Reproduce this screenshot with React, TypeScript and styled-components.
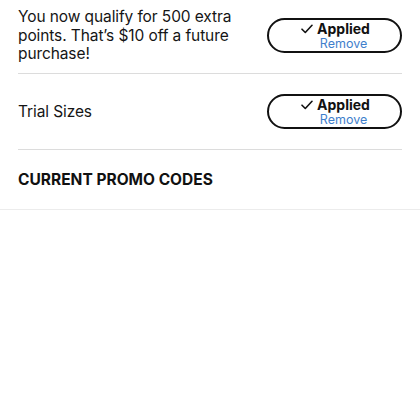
import React from 'react'
import styled, { createGlobalStyle } from 'styled-components'

const GlobalStyle = createGlobalStyle`
  body {
    margin: 0;
    background: #fff;
    font-family: Inter, "Liberation Sans", Arial, sans-serif;
    color: #111;
  }
`

const Page = styled.div`
  width: 420px;
`

const Inset = styled.div`
  padding: 0 18px;
`

const PromoRow = styled.div<{ $pad: string }>`
  display: flex;
  align-items: center;
  justify-content: space-between;
  padding: ${(p) => p.$pad};
  border-bottom: 1px solid #dcdcdc;
`

const PromoText = styled.div<{ $nudge?: number }>`
  max-width: 240px;
  padding-top: ${(p) => p.$nudge || 0}px;
  font-size: 15.5px;
  line-height: 18.5px;
  letter-spacing: -0.1px;
  color: #151515;
`

const AppliedButton = styled.button`
  box-sizing: border-box;
  width: 135px;
  height: 35px;
  border: 2.5px solid #111;
  border-radius: 18px;
  background: #fff;
  display: flex;
  align-items: center;
  justify-content: center;
  gap: 4px;
  padding: 0 0 0 2px;
  font-family: inherit;
  cursor: pointer;
`

const Labels = styled.div`
  display: flex;
  flex-direction: column;
  align-items: center;
`

const AppliedLabel = styled.span`
  font-size: 14px;
  font-weight: 700;
  line-height: 17px;
  color: #111;
`

const RemoveLabel = styled.span`
  font-size: 12.5px;
  line-height: 15px;
  margin-top: -1px;
  color: #3f80cc;
`

const Check = styled.svg`
  width: 12px;
  height: 10px;
  margin-top: -13px;
  flex-shrink: 0;
`

const SectionHeader = styled.div`
  padding: 20px 18px;
  font-size: 15.5px;
  line-height: 19px;
  font-weight: 700;
  color: #111;
  border-bottom: 1px solid #ececec;
`

function Applied() {
  return (
    <AppliedButton>
      <Check viewBox="0 0 12 10">
        <path d="M1 5.2 L4.3 8.5 L11 1.3" fill="none" stroke="#111" strokeWidth="1.6" strokeLinecap="round" strokeLinejoin="round" />
      </Check>
      <Labels>
        <AppliedLabel>Applied</AppliedLabel>
        <RemoveLabel>Remove</RemoveLabel>
      </Labels>
    </AppliedButton>
  )
}

export default function App() {
  return (
    <Page>
      <GlobalStyle />
      <Inset>
        <PromoRow $pad="8px 0 9px">
          <PromoText>You now qualify for 500 extra points. That’s $10 off a future purchase!</PromoText>
          <Applied />
        </PromoRow>
        <PromoRow $pad="20px 0 20px">
          <PromoText $nudge={2}>Trial Sizes</PromoText>
          <Applied />
        </PromoRow>
      </Inset>
      <SectionHeader>CURRENT PROMO CODES</SectionHeader>
    </Page>
  )
}
